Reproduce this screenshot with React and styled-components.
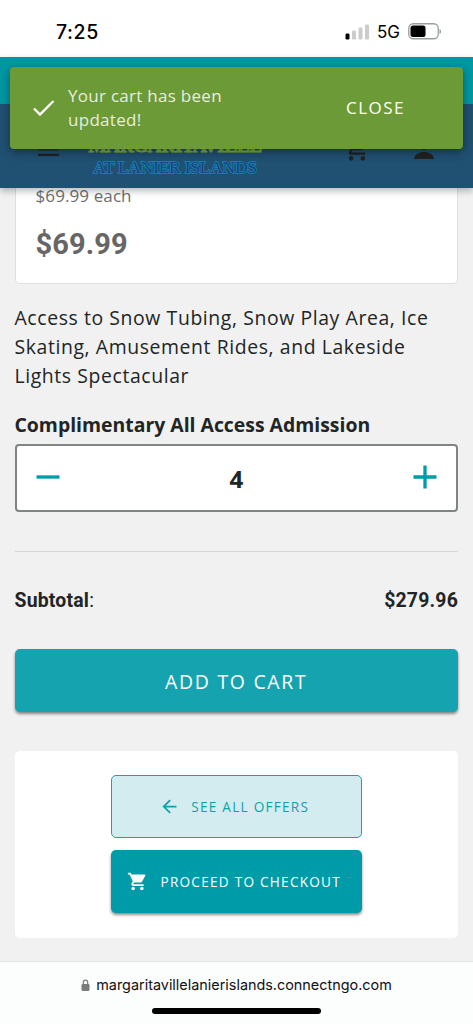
import styled, { createGlobalStyle, css } from 'styled-components'
import { MdArrowBack, MdShoppingCart } from 'react-icons/md'

const GlobalStyle = createGlobalStyle`
  * {
    box-sizing: border-box;
  }

  body {
    margin: 0;
    background: #f1f1f1;
    color: #212525;
    font-family: 'Open Sans', 'Noto Sans', sans-serif;
  }

  button {
    font-family: inherit;
    cursor: pointer;
  }
`

const Screen = styled.div`
  position: relative;
  display: flex;
  flex-direction: column;
  width: 473px;
  height: 1024px;
  overflow: hidden;
  background: #f1f1f1;
`

const StatusBar = styled.div`
  display: flex;
  flex: none;
  align-items: center;
  justify-content: space-between;
  height: 57px;
  padding: 6px 31px 0 56px;
  background: #fff;
  color: #000;
  font-family: Inter, sans-serif;
`

const Time = styled.span`
  font-size: 19.5px;
  font-weight: 500;
  letter-spacing: 0.6px;
`

const StatusIcons = styled.div`
  display: flex;
  align-items: center;
  gap: 8px;
  font-size: 17px;
  font-weight: 400;
`

const Header = styled.header`
  position: relative;
  z-index: 1;
  flex: none;
  height: 131px;
  padding-top: 47px;
  background: #0097a3;
  box-shadow: 0 3px 7px rgba(0, 0, 0, 0.28);
`

const NavBar = styled.nav`
  display: flex;
  align-items: flex-start;
  height: 84px;
  padding: 30px 37px 0 33px;
  background: #205072;
  color: #212121;
`

const Logo = styled.div`
  display: flex;
  flex-direction: column;
  align-items: center;
  width: 182px;
  margin-left: 19px;
  font-family: 'Liberation Serif', serif;
  font-weight: 700;
  white-space: nowrap;
`

const LogoName = styled.span`
  color: #7fae36;
  font-size: 19.5px;
  line-height: 24px;
  letter-spacing: -0.6px;
  -webkit-text-stroke: 1px #7fae36;
`

const LogoPlace = styled.span`
  margin-top: -1px;
  color: #173f8c;
  font-size: 17.5px;
  font-weight: 400;
  line-height: 20px;
  letter-spacing: -0.25px;
  -webkit-text-stroke: 1.6px #1787ad;
  paint-order: stroke fill;
`

const NavIcons = styled.div`
  display: flex;
  align-items: flex-start;
  gap: 41px;
  margin-left: auto;
  padding-top: 1px;
`

const Toast = styled.div`
  position: absolute;
  z-index: 2;
  top: 67px;
  left: 10px;
  display: flex;
  align-items: center;
  width: 453px;
  height: 82px;
  padding: 0 58px 0 23px;
  border-radius: 4px;
  background: #6c9a36;
  box-shadow: 0 3px 10px rgba(0, 0, 0, 0.4);
`

const ToastText = styled.p`
  width: 190px;
  margin: 0 0 0 13px;
  color: rgba(255, 255, 255, 0.85);
  font-size: 17px;
  line-height: 24px;
  letter-spacing: 0.28px;
`

const ToastClose = styled.button`
  margin: -2px 0 0 auto;
  padding: 0;
  border: 0;
  background: none;
  color: #fff;
  font-size: 17px;
  letter-spacing: 1.5px;
`

const Content = styled.main`
  display: flex;
  flex: 1;
  flex-direction: column;
  min-height: 0;
  padding: 0 15px 0 14.5px;
`

const PriceCard = styled.section`
  flex: none;
  height: 96px;
  padding: 0 20px;
  border: 1px solid #dfdfdf;
  border-top: 0;
  border-radius: 0 0 5px 5px;
  background: #fff;
`

const UnitPrice = styled.p`
  margin: -4px 0 0;
  color: #6e6e6e;
  font-size: 17px;
  line-height: 24px;
  letter-spacing: 0.1px;
`

const Price = styled.p`
  margin: 19px 0 0;
  color: #666;
  font-family: Roboto, sans-serif;
  font-size: 29px;
  font-weight: 700;
  line-height: 34px;
  letter-spacing: 0.1px;
`

const Description = styled.p`
  margin: 19px 0 0;
  font-size: 19.4px;
  line-height: 29px;
  letter-spacing: 0.6px;
`

const FieldLabel = styled.label`
  margin-top: 21px;
  font-size: 19.4px;
  font-weight: 700;
  line-height: 28px;
`

const Stepper = styled.div`
  display: flex;
  flex: none;
  align-items: center;
  justify-content: space-between;
  height: 68px;
  margin-top: 5px;
  padding: 0 19px;
  border: 2px solid #808484;
  border-radius: 4px;
  background: #fff;
`

const StepButton = styled.button`
  display: flex;
  margin-top: -2px;
  padding: 0;
  border: 0;
  background: none;
  color: #009ba8;
`

const Quantity = styled.span`
  font-size: 24px;
  font-weight: 700;
`

const Divider = styled.hr`
  width: 100%;
  margin: 39px 0 0;
  border: 0;
  border-top: 1px solid #d5d7d7;
`

const SubtotalRow = styled.div`
  display: flex;
  justify-content: space-between;
  margin-top: 36px;
  font-family: Roboto, sans-serif;
  font-size: 19.4px;
  line-height: 26px;
  letter-spacing: 0.2px;
`

const Button = styled.button`
  display: flex;
  flex: none;
  align-items: center;
  justify-content: center;
  width: 100%;
  height: 63px;
  padding: 0 4px 0 0;
  border: 0;
  border-radius: 5px;
  background: ${({ $bg }) => $bg || '#009ba8'};
  color: #fff;
  font-size: 13.6px;
  letter-spacing: 1.25px;
  box-shadow: 0 2px 3px rgba(0, 0, 0, 0.45);

  ${({ $large }) =>
    $large &&
    css`
      margin-top: 35px;
      padding: 1px 0 0;
      font-size: 19.4px;
      letter-spacing: 1.73px;
    `}

  ${({ $outlined }) =>
    $outlined &&
    css`
      border: 1px solid #16a4af;
      background: #d3ecef;
      color: #129fab;
      box-shadow: none;
    `}
`

const ButtonIcon = styled.span`
  display: flex;
  margin-top: -1px;
  margin-right: ${({ $gap }) => $gap}px;
`

const Actions = styled.section`
  display: flex;
  flex: none;
  flex-direction: column;
  gap: 12px;
  height: 187px;
  margin-top: 39px;
  padding: 24px 96px;
  border-radius: 5px;
  background: #fff;
`

const AddressBar = styled.footer`
  display: flex;
  flex: none;
  flex-direction: column;
  align-items: center;
  height: 63px;
  padding-top: 12px;
  border-top: 1px solid #e3e3e3;
  background: #fcfdfd;
`

const Address = styled.div`
  display: flex;
  align-items: center;
  gap: 6px;
  color: #111;
  font-family: Inter, sans-serif;
  font-size: 14.4px;
  line-height: 22px;
`

const HomeIndicator = styled.div`
  width: 169px;
  height: 6px;
  margin-top: 12px;
  border-radius: 3px;
  background: #000;
`

const SignalIcon = () => (
  <svg width='24' height='16' viewBox='0 0 24 16'>
    <rect x='0.5' y='9.5' width='4' height='6' rx='1.3' fill='#000' />
    <rect x='7' y='6.5' width='4' height='9' rx='1.3' fill='#ccc' />
    <rect x='13.5' y='3.5' width='4' height='12' rx='1.3' fill='#ccc' />
    <rect x='20' y='0.5' width='4' height='15' rx='1.3' fill='#ccc' />
  </svg>
)

const BatteryIcon = () => (
  <svg width='34' height='17' viewBox='0 0 34 17'>
    <rect x='0.75' y='0.75' width='29.5' height='15' rx='4.5' fill='none' stroke='#999f9f' strokeWidth='1.3' />
    <rect x='2.5' y='2.5' width='15' height='11.5' rx='2.5' fill='#000' />
    <path d='M31.5 6v5c1-.4 1.6-1.3 1.6-2.5S32.5 6.4 31.5 6z' fill='#999f9f' />
  </svg>
)

const App = () => {
  return (
    <>
      <GlobalStyle />
      <Screen>
        <StatusBar>
          <Time>7:25</Time>
          <StatusIcons>
            <SignalIcon />
            <span>5G</span>
            <BatteryIcon />
          </StatusIcons>
        </StatusBar>

        <Header>
          <NavBar>
            <svg width='32' height='24' viewBox='0 0 32 24'>
              <path d='M5 5.5h21M5 13.5h21M5 20.9h21' stroke='currentColor' strokeWidth='2.2' />
              <path d='M5 16h21' stroke='currentColor' strokeWidth='1' />
            </svg>
            <Logo>
              <LogoName>MARGARITAVILLE</LogoName>
              <LogoPlace>AT LANIER ISLANDS</LogoPlace>
            </Logo>
            <NavIcons>
              <MdShoppingCart size={28} />
              <svg width='24' height='30' viewBox='0 0 24 30'>
                <circle cx='12' cy='10' r='5' fill='currentColor' />
                <path d='M2 24c0-4.5 6-7 10-7s10 2.5 10 7z' fill='currentColor' />
              </svg>
            </NavIcons>
          </NavBar>
        </Header>

        <Toast>
          <svg width='22' height='18' viewBox='0 0 22 18'>
            <path d='M1 9.5l6 6L20.5 2' fill='none' stroke='#fff' strokeWidth='2.3' />
          </svg>
          <ToastText>Your cart has been updated!</ToastText>
          <ToastClose>CLOSE</ToastClose>
        </Toast>

        <Content>
          <PriceCard>
            <UnitPrice>$69.99 each</UnitPrice>
            <Price>$69.99</Price>
          </PriceCard>

          <Description>
            Access to Snow Tubing, Snow Play Area, Ice Skating, Amusement Rides, and Lakeside Lights Spectacular
          </Description>

          <FieldLabel>Complimentary All Access Admission</FieldLabel>
          <Stepper>
            <StepButton aria-label='decrease'>
              <svg width='24' height='24' viewBox='0 0 24 24'>
                <path d='M0.5 12h23' stroke='currentColor' strokeWidth='3.3' />
              </svg>
            </StepButton>
            <Quantity>4</Quantity>
            <StepButton aria-label='increase'>
              <svg width='24' height='24' viewBox='0 0 24 24'>
                <path d='M0.5 12h23M12 0.5v23' stroke='currentColor' strokeWidth='3.3' />
              </svg>
            </StepButton>
          </Stepper>

          <Divider />

          <SubtotalRow>
            <span>
              <b>Subtotal</b>:
            </span>
            <b>$279.96</b>
          </SubtotalRow>

          <Button $large $bg='#15a4af'>
            ADD TO CART
          </Button>

          <Actions>
            <Button $outlined>
              <ButtonIcon $gap={11}>
                <MdArrowBack size={21} />
              </ButtonIcon>
              SEE ALL OFFERS
            </Button>
            <Button>
              <ButtonIcon $gap={12}>
                <MdShoppingCart size={21} />
              </ButtonIcon>
              PROCEED TO CHECKOUT
            </Button>
          </Actions>
        </Content>

        <AddressBar>
          <Address>
            <svg width='9' height='13' viewBox='0 0 9 13'>
              <rect x='0.5' y='5' width='8' height='7' rx='1.3' fill='#7b7b7b' />
              <path d='M2.3 5.5V3.3a2.2 2.2 0 0 1 4.4 0v2.2' fill='none' stroke='#7b7b7b' strokeWidth='1.2' />
            </svg>
            margaritavillelanierislands.connectngo.com
          </Address>
          <HomeIndicator />
        </AddressBar>
      </Screen>
    </>
  )
}

export default App
